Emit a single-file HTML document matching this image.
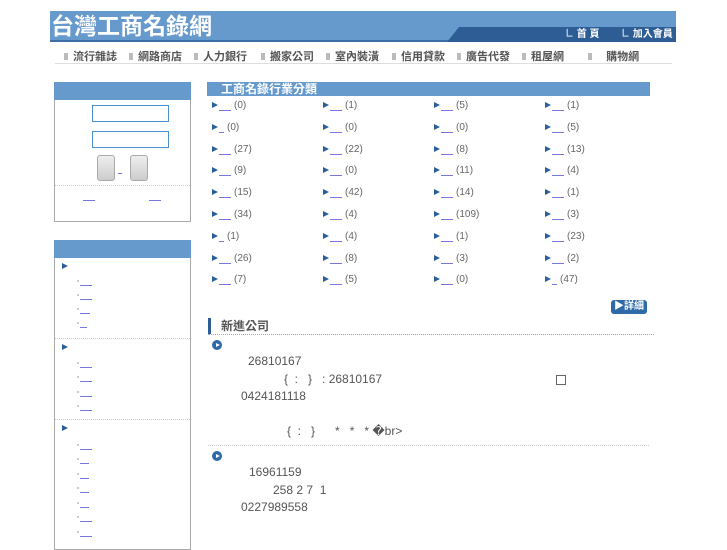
<!DOCTYPE html>
<html><head><meta charset="utf-8"><style>
*{margin:0;padding:0;box-sizing:border-box}
body{width:727px;height:545px;background:#fff;position:relative;overflow:hidden;font-family:"Liberation Sans","Noto Sans CJK TC",sans-serif;color:#555}
.a{position:absolute;white-space:nowrap}
.lk{display:inline-block;border-bottom:1px solid #7777dd;height:1px;vertical-align:baseline}
.tri{width:0;height:0;border-left:6px solid #2a5f9a;border-top:3.5px solid transparent;border-bottom:3.5px solid transparent;position:absolute}
.cell{position:absolute;font-size:10px;color:#666;white-space:nowrap}
.nav{font-size:11px;color:#555;font-weight:bold}
.nav i{display:inline-block;width:4px;height:7px;background:#bbb;margin-right:5px;vertical-align:0}
.t{font-size:12px;color:#555}
</style></head><body>
<!-- header -->
<div class="a" style="left:50px;top:11px;width:626px;height:31px;background:#6699cc;border-bottom:2px solid #3d6ea8"></div>
<div class="a" style="left:51px;top:11px;font-size:23px;font-weight:bold;color:#fff;line-height:30px;letter-spacing:0px">台灣工商名錄網</div>
<div class="a" style="left:447px;top:27px;width:229px;height:15px;background:#2e5d96;clip-path:polygon(12px 0,100% 0,100% 100%,0 100%)"></div>
<div class="a" style="left:564px;top:28px;font-size:10px;color:#fff;font-weight:bold;line-height:13px"><span style="color:#bcd">㇗</span> 首 頁</div>
<div class="a" style="left:620px;top:28px;font-size:10px;color:#fff;font-weight:bold;line-height:13px"><span style="color:#bcd">㇗</span> 加入會員</div>
<div class="a nav" style="left:64px;top:48px"><i></i>流行雜誌</div>
<div class="a nav" style="left:129px;top:48px"><i></i>網路商店</div>
<div class="a nav" style="left:194px;top:48px"><i></i>人力銀行</div>
<div class="a nav" style="left:261px;top:48px"><i></i>搬家公司</div>
<div class="a nav" style="left:326px;top:48px"><i></i>室內裝潢</div>
<div class="a nav" style="left:392px;top:48px"><i></i>信用貸款</div>
<div class="a nav" style="left:457px;top:48px"><i></i>廣告代發</div>
<div class="a nav" style="left:522px;top:48px"><i></i>租屋網</div>
<div class="a nav" style="left:588px;top:48px"><i></i>&nbsp;&nbsp;&nbsp;購物網</div>
<div class="a" style="left:55px;top:63px;width:617px;height:1px;background:#ddd"></div>

<!-- left box 1 -->
<div class="a" style="left:54px;top:82px;width:137px;height:140px;border:1px solid #aaa;border-top:none"></div>
<div class="a" style="left:54px;top:82px;width:137px;height:18px;background:#6699cc"></div>
<div class="a" style="left:92px;top:105px;width:77px;height:17px;border:1px solid #4a90d0"></div>
<div class="a" style="left:92px;top:131px;width:77px;height:17px;border:1px solid #4a90d0"></div>
<div class="a" style="left:97px;top:155px;width:18px;height:26px;border:1px solid #aaa;border-radius:3px;background:linear-gradient(#eee,#ccc)"></div>
<div class="a" style="left:130px;top:155px;width:18px;height:26px;border:1px solid #aaa;border-radius:3px;background:linear-gradient(#eee,#ccc)"></div>
<div class="a" style="left:118px;top:173px;width:4px;height:1px;background:#77d"></div>
<div class="a" style="left:55px;top:185px;width:135px;border-top:1px dotted #ccc"></div>
<div class="a" style="left:83px;top:200px;width:12px;height:1px;background:#77d"></div>
<div class="a" style="left:149px;top:200px;width:12px;height:1px;background:#77d"></div>

<!-- left box 2 -->
<div class="a" style="left:54px;top:240px;width:137px;height:310px;border:1px solid #aaa;border-top:none"></div>
<div class="a" style="left:54px;top:240px;width:137px;height:18px;background:#6699cc"></div>
<div class="tri" style="left:62px;top:263px"></div>
<div class="tri" style="left:62px;top:344px"></div>
<div class="tri" style="left:62px;top:425px"></div>
<div class="a" style="left:55px;top:338px;width:135px;border-top:1px dotted #ccc"></div>
<div class="a" style="left:55px;top:419px;width:135px;border-top:1px dotted #ccc"></div>
<div id="sub"></div>

<!-- right category -->
<div class="a" style="left:207px;top:82px;width:443px;height:14px;background:#6699cc"></div>
<div class="a" style="left:221px;top:81px;font-size:12px;font-weight:bold;color:#fff;line-height:16px">工商名錄行業分類</div>
<div id="grid"></div>

<div class="a" style="left:611px;top:300px;width:36px;height:14px;background:#2e6aa8;border-radius:3px;color:#fff;font-size:10px;font-weight:bold;line-height:14px;padding-left:3px">▶詳細</div>
<div class="a" style="left:208px;top:318px;width:3px;height:16px;background:#2e5d96"></div>
<div class="a" style="left:221px;top:318px;font-size:12px;font-weight:bold;color:#555;line-height:16px">新進公司</div>
<div class="a" style="left:208px;top:334px;width:446px;border-top:1px dotted #8aaad0"></div>

<div class="a" style="left:212px;top:340px;width:10px;height:10px;border-radius:50%;background:#2e6aa8"></div>
<div class="a" style="left:216px;top:342.5px;width:0;height:0;border-left:4px solid #fff;border-top:2.5px solid transparent;border-bottom:2.5px solid transparent"></div>
<div class="a t" style="left:248px;top:354px">26810167</div>
<div class="a t" style="left:284px;top:372px">{ &nbsp;: &nbsp;&nbsp;} &nbsp;&nbsp;: 26810167</div>
<div class="a" style="left:556px;top:375px;width:10px;height:10px;border:1px solid #666"></div>
<div class="a t" style="left:241px;top:389px">0424181118</div>
<div class="a t" style="left:287px;top:424px">{ &nbsp;: &nbsp;&nbsp;} &nbsp;&nbsp;&nbsp;&nbsp;&nbsp;* &nbsp;&nbsp;* &nbsp;&nbsp;* �br&gt;</div>
<div class="a" style="left:208px;top:445px;width:441px;border-top:1px dotted #ccc"></div>
<div class="a" style="left:212px;top:451px;width:10px;height:10px;border-radius:50%;background:#2e6aa8"></div>
<div class="a" style="left:216px;top:453.5px;width:0;height:0;border-left:4px solid #fff;border-top:2.5px solid transparent;border-bottom:2.5px solid transparent"></div>
<div class="a t" style="left:249px;top:465px">16961159</div>
<div class="a t" style="left:273px;top:483px">258 2 7 &nbsp;1</div>
<div class="a t" style="left:241px;top:500px">0227989558</div>

<script>
var d=[["0","1","5","1"],["0","0","0","5"],["27","22","8","13"],["9","0","11","4"],["15","42","14","1"],["34","4","109","3"],["1","4","1","23"],["26","8","3","2"],["7","5","0","47"]];
var sh={"1,0":1,"6,0":1,"8,3":1};
var xs=[212,323,434,545],h="";
for(var r=0;r<9;r++)for(var c=0;c<4;c++){var y=100+r*21.8;var w=sh[r+","+c]?5:12;
h+='<div class="tri" style="left:'+xs[c]+'px;top:'+(y+2)+'px"></div><div class="a" style="left:'+(xs[c]+7)+'px;top:'+(y+10)+'px;width:'+w+'px;height:1px;background:#77d"></div><div class="cell" style="left:'+(xs[c]+8+w+2)+'px;top:'+y+'px">('+d[r][c]+')</div>';}
document.getElementById("grid").outerHTML=h;
var ys=[285,299,313,327,367,381,396,410,449,463,478,492,507,521,536],ws=[12,12,10,7,12,12,12,12,12,9,9,9,9,12,12],s="";
for(var i=0;i<ys.length;i++){s+='<div class="a" style="left:77px;top:'+(ys[i]-5)+'px;width:2px;height:2px;background:#ccc"></div><div class="a" style="left:80px;top:'+ys[i]+'px;width:'+ws[i]+'px;height:1px;background:#77d"></div>';}
document.getElementById("sub").outerHTML=s;
</script>
</body></html>
